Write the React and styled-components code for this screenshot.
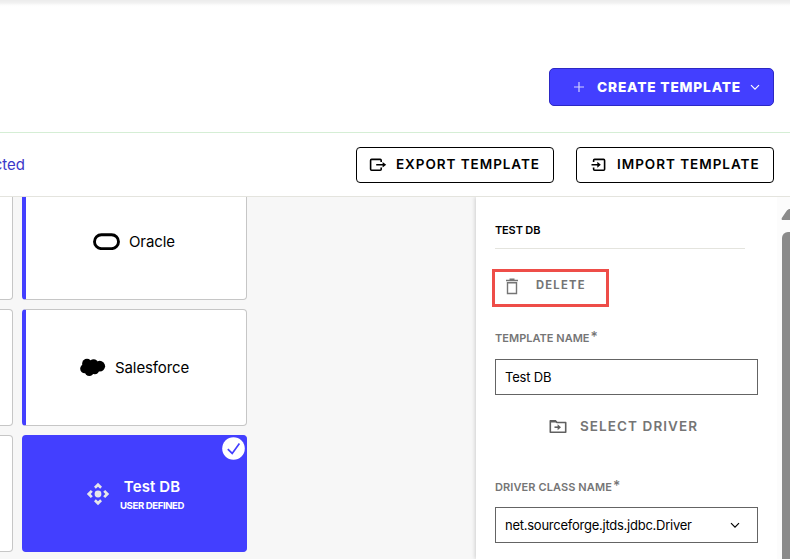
import React from "react";
import styled, { createGlobalStyle } from "styled-components";

const Global = createGlobalStyle`
  *, *::before, *::after { box-sizing: border-box; }
  body { margin: 0; background: #fff; overflow: hidden; }
  button { margin: 0; padding: 0; background: none; border: 0; cursor: pointer; }
  svg { display: block; flex: none; }
`;

const Page = styled.div`
  width: 790px;
  height: 559px;
  overflow: hidden;
  display: flex;
  flex-direction: column;
  background: #fff;
  color: #000;
  font-family: Inter, "Liberation Sans", sans-serif;
`;

const Text = styled.span`
  font-size: ${(p) => p.$size}px;
  font-weight: ${(p) => p.$weight || 400};
  letter-spacing: ${(p) => p.$track || 0}px;
  line-height: ${(p) => p.$line || 20}px;
  white-space: nowrap;
`;

const Header = styled.header`
  height: 133px;
  flex: none;
  display: flex;
  justify-content: flex-end;
  align-items: flex-start;
  padding: 68px 16px 0;
  border-bottom: 1px solid #d5eed5;
  background: linear-gradient(#ececec, #f2f2f2 3px, #fcfcfc 5px, #fff 7px);
`;

const CreateButton = styled.button`
  width: 225px;
  height: 38px;
  display: flex;
  align-items: center;
  padding-left: 23px;
  border: 1px solid #2c28c4;
  border-radius: 5px;
  background: #433fff;
  color: #fff;
  font-family: inherit;

  svg:first-child { margin-right: 12px; }
  svg:last-child { margin-left: auto; margin-right: 13px; }
`;

const Toolbar = styled.div`
  height: 64px;
  flex: none;
  display: flex;
  align-items: center;
  padding: 0 16px 0 0;
  border-bottom: 1px solid #e4e4de;
  background: #fff;
  position: relative;
  z-index: 1;
`;

const Selected = styled.div`
  width: 25px;
  display: flex;
  justify-content: flex-end;
  margin-right: auto;
  color: #3c38c9;
`;

const OutlineButton = styled.button`
  width: 198px;
  height: 36px;
  display: flex;
  align-items: center;
  padding: 0 0 2px ${(p) => p.$pad}px;
  gap: ${(p) => p.$gap}px;
  margin-left: 22px;
  border: 1px solid #000;
  border-radius: 4px;
  color: #000;
  font-family: inherit;
  svg { margin-top: 2px; }
`;

const Body = styled.main`
  flex: 1;
  min-height: 0;
  display: flex;
  background: #f7f7f7;
`;

const CardArea = styled.section`
  width: 476px;
  overflow: hidden;
`;

const CardGrid = styled.div`
  display: grid;
  grid-template-columns: 225px 225px;
  grid-auto-rows: 117px;
  gap: 9px;
  margin: -14px 0 0 -212px;
`;

const Card = styled.article`
  position: relative;
  display: flex;
  align-items: center;
  padding-left: ${(p) => p.$pad || 0}px;
  gap: ${(p) => p.$gap || 0}px;
  overflow: hidden;
  border: 1px solid ${(p) => (p.$selected ? "#433fff" : "#c6c6c6")};
  border-left: 4px solid #433fff;
  border-radius: 4px;
  background: ${(p) => (p.$selected ? "#433fff" : "#fff")};
  color: ${(p) => (p.$selected ? "#fff" : "#000")};
`;

const CardLabels = styled.div`
  display: flex;
  flex-direction: column;
  align-items: center;
  padding-top: 4px;
`;

const CheckBadge = styled.span`
  position: absolute;
  top: 1px;
  right: 1px;
`;

const Panel = styled.aside`
  width: 301px;
  display: flex;
  flex-direction: column;
  align-items: flex-start;
  padding: 0 0 0 19px;
  background: #fff;
  box-shadow: -1px 0 4px rgba(0, 0, 0, 0.16);
`;

const PanelTitle = styled.div`
  width: 250px;
  height: 52px;
  flex: none;
  display: flex;
  align-items: flex-end;
  padding-bottom: 8px;
  border-bottom: 1px solid #e4e4de;
`;

const DeleteButton = styled.button`
  width: 117px;
  height: 38px;
  flex: none;
  display: flex;
  align-items: center;
  margin: 20px 0 0 -3px;
  padding: 0 0 6px 10px;
  gap: 17px;
  border: 3px solid #ee4d48;
  color: #757575;
  font-family: inherit;
  svg { margin-top: 3px; }
`;

const Label = styled.label`
  height: 20px;
  flex: none;
  display: flex;
  margin-top: ${(p) => p.$top}px;
  color: #757575;
`;

const Star = styled(Text)`
  margin: -1px 0 0 1px;
`;

const Field = styled.div`
  width: 263px;
  height: 36px;
  flex: none;
  display: flex;
  align-items: center;
  justify-content: space-between;
  margin-top: ${(p) => p.$top}px;
  padding: 0 17px 0 9px;
  border: 1px solid #646464;
  background: #fff;
`;

const DriverButton = styled.button`
  height: 20px;
  flex: none;
  display: flex;
  align-items: center;
  gap: 13px;
  margin: 21px 0 0 54px;
  color: #757575;
  font-family: inherit;
`;

const ScrollTrack = styled.div`
  width: 13px;
  display: flex;
  flex-direction: column;
  align-items: flex-end;
  padding-top: 12px;
  overflow: hidden;
  background: #fcfcfc;
`;

const ScrollThumb = styled.div`
  width: 8px;
  flex: 1;
  margin-top: 12px;
  border-radius: 6px 0 0 0;
  background: #8b8b8b;
`;

const Chevron = () => (
  <svg width="10" height="7" viewBox="0 0 10 7" fill="none" stroke="currentColor" strokeWidth="1.2">
    <path d="M1 1.2 5 5.2 9 1.2" />
  </svg>
);

const PlusIcon = () => (
  <svg width="12" height="12" viewBox="0 0 12 12" stroke="#d3d2ff" strokeWidth="1.2">
    <path d="M6 1v10M1 6h10" />
  </svg>
);

const ExportIcon = () => (
  <svg width="18" height="14" viewBox="0 0 18 14" fill="none" stroke="#000" strokeWidth="1.6">
    <path d="M12.200 4V2.400q0-1-1-1H2.600q-1 0-1 1v8.800q0 1 1 1h8.600q1 0 1-1V9.600M7.200 6.800h7" />
    <path d="M13.600 4 17.200 6.800 13.600 9.600z" fill="#000" stroke="none" />
  </svg>
);

const ImportIcon = () => (
  <svg width="15" height="14" viewBox="0 0 15 14" fill="none" stroke="#000" strokeWidth="1.6">
    <path d="M2.600 4V2.400q0-1 1-1h9q1 0 1 1v8.800q0 1-1 1h-9q-1 0-1-1V9.600M.5 6.800h7" />
    <path d="M6.300 3.800 9.800 6.800 6.300 9.800z" fill="#000" stroke="none" />
  </svg>
);

const OracleIcon = () => (
  <svg width="28" height="17" viewBox="0 0 28 17" fill="none" stroke="#000" strokeWidth="2.900">
    <rect x="2.500" y="1.800" width="24" height="13.800" rx="6.900" />
  </svg>
);

const CloudIcon = () => (
  <svg width="26" height="19" viewBox="0 0 26 19">
    <circle cx="7" cy="5.700" r="4.900" />
    <circle cx="13.600" cy="5.800" r="4.500" />
    <circle cx="19.700" cy="8.200" r="5.400" />
    <circle cx="4.700" cy="10.800" r="4.500" />
    <circle cx="9.300" cy="13.500" r="4.500" />
    <circle cx="14.800" cy="11.800" r="4.400" />
    <path d="M6 5h12v8H6z" />
  </svg>
);

const ApiIcon = () => (
  <svg width="24" height="24" viewBox="0 0 24 24" fill="#e6e6ea">
    <circle cx="12" cy="12" r="3.400" />
    <path d="M12 .8 16 4.800 14.200 6.800 12 4.700 9.800 6.800 8 4.800zM12 23.200 8 19.200 9.800 17.200 12 19.300 14.200 17.200 16 19.200zM.8 12 4.800 8 6.800 9.800 4.700 12 6.800 14.200 4.800 16zM23.200 12 19.200 16 17.200 14.200 19.300 12 17.200 9.800 19.200 8z" />
  </svg>
);

const CheckIcon = () => (
  <svg width="23" height="23" viewBox="0 0 23 23" fill="none">
    <circle cx="11.500" cy="11.500" r="11.300" fill="#fff" />
    <path d="m5.800 12.200 4.400 4.200 7.200-9.800" stroke="#433fff" strokeWidth="1.700" />
  </svg>
);

const TrashIcon = () => (
  <svg width="14" height="17" viewBox="0 0 14 17" fill="none" stroke="currentColor" strokeWidth="1.400">
    <path d="M1 2.500h12M4.500 1.300h5M2.500 4.800h9v10.700h-9z" />
  </svg>
);

const FolderIcon = () => (
  <svg width="18" height="15" viewBox="0 0 18 15" fill="none" stroke="#606060" strokeWidth="1.600">
    <path d="M1.300 1.700h5l1.700 1.800h8.700v9.700H1.300z" strokeLinejoin="round" />
    <path d="M1 1h5.600l2 2.500H1z" fill="#606060" stroke="none" />
    <path d="M5.500 8.200h4" />
    <path d="M8.600 5.200 12 8.200 8.600 11.200z" fill="#606060" stroke="none" />
  </svg>
);

const ScrollArrow = () => (
  <svg width="9" height="11" viewBox="0 0 9 11">
    <path d="M9 0H8Q6 .5 4.500 3.500L.8 9Q0 11 2 11H9z" fill="#8b8b8b" />
  </svg>
);

export default function App() {
  return (
    <Page>
      <Global />
      <Header>
        <CreateButton>
          <PlusIcon />
          <Text $size={13.7} $weight={800} $track={0.83}>CREATE TEMPLATE</Text>
          <Chevron />
        </CreateButton>
      </Header>
      <Toolbar>
        <Selected><Text $size={15}>cted</Text></Selected>
        <OutlineButton $pad={12} $gap={9}>
          <ExportIcon />
          <Text $size={13.5} $weight={600} $track={0.95}>EXPORT TEMPLATE</Text>
        </OutlineButton>
        <OutlineButton $pad={14} $gap={11}>
          <ImportIcon />
          <Text $size={13.5} $weight={600} $track={0.97}>IMPORT TEMPLATE</Text>
        </OutlineButton>
      </Toolbar>
      <Body>
        <CardArea>
          <CardGrid>
            <Card />
            <Card $pad={66} $gap={9}>
              <OracleIcon />
              <Text $size={15} $track={-0.1}>Oracle</Text>
            </Card>
            <Card />
            <Card $pad={54} $gap={9}>
              <CloudIcon />
              <Text $size={15} $track={-0.1}>Salesforce</Text>
            </Card>
            <Card />
            <Card $selected $pad={60} $gap={10}>
              <ApiIcon />
              <CardLabels>
                <Text $size={15} $weight={600} $track={0.1}>Test DB</Text>
                <Text $size={9.6} $weight={700} $line={17} $track={-0.4}>USER DEFINED</Text>
              </CardLabels>
              <CheckBadge><CheckIcon /></CheckBadge>
            </Card>
          </CardGrid>
        </CardArea>
        <Panel>
          <PanelTitle><Text $size={11} $weight={600} $track={-0.15}>TEST DB</Text></PanelTitle>
          <DeleteButton>
            <TrashIcon />
            <Text $size={11.2} $weight={700} $track={1.25}>DELETE</Text>
          </DeleteButton>
          <Label $top={21}>
            <Text $size={11} $weight={600} $track={0.02}>TEMPLATE NAME</Text>
            <Star $size={14} $weight={500}>*</Star>
          </Label>
          <Field $top={11}><Text $size={13} $track={-0.2}>Test DB</Text></Field>
          <DriverButton>
            <FolderIcon />
            <Text $size={13.5} $weight={600} $track={1.08}>SELECT DRIVER</Text>
          </DriverButton>
          <Label $top={41}>
            <Text $size={11} $weight={600} $track={0.1}>DRIVER CLASS NAME</Text>
            <Star $size={14} $weight={500}>*</Star>
          </Label>
          <Field $top={10}>
            <Text $size={13} $track={-0.25}>net.sourceforge.jtds.jdbc.Driver</Text>
            <Chevron />
          </Field>
        </Panel>
        <ScrollTrack>
          <ScrollArrow />
          <ScrollThumb />
        </ScrollTrack>
      </Body>
    </Page>
  );
}
